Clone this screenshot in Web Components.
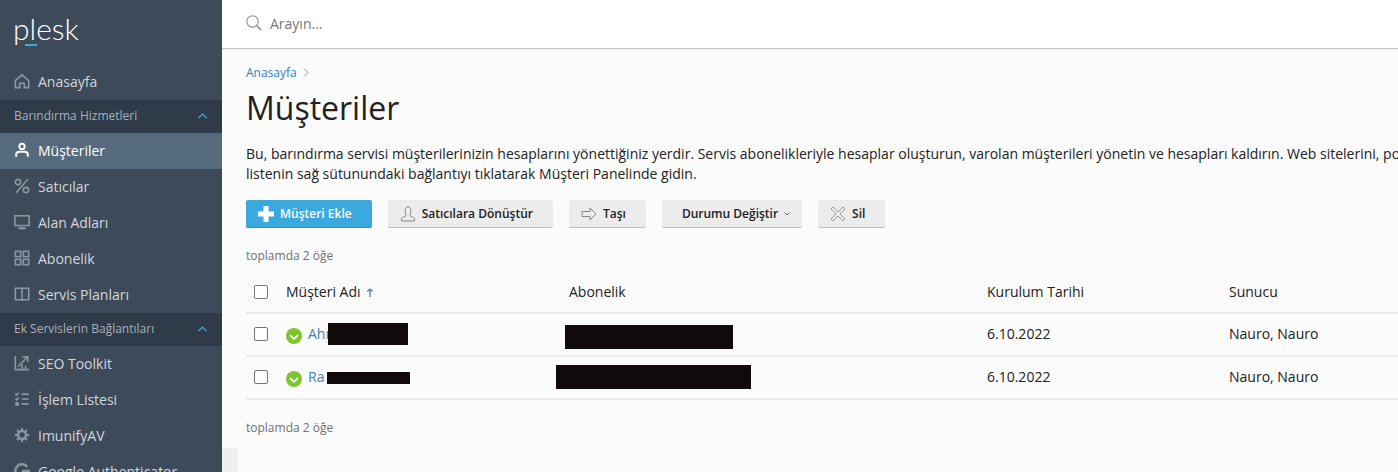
<!DOCTYPE html>
<html lang="tr">
<head>
<meta charset="utf-8">
<title>Müşteriler</title>
<style>
  html, body { margin: 0; height: 100%; overflow: hidden; }
  body { font-family: "Open Sans", sans-serif; background: #fbfbfb; }
</style>
</head>
<body>
<plesk-shell>
  <plesk-sidebar slot="side">
    <side-item icon="home" label="Anasayfa"></side-item>
    <side-group label="Barındırma Hizmetleri"></side-group>
    <side-item icon="user" label="Müşteriler" active></side-item>
    <side-item icon="percent" label="Satıcılar"></side-item>
    <side-item icon="monitor" label="Alan Adları"></side-item>
    <side-item icon="grid" label="Abonelik"></side-item>
    <side-item icon="book" label="Servis Planları"></side-item>
    <side-group label="Ek Servislerin Bağlantıları"></side-group>
    <side-item icon="chart" label="SEO Toolkit"></side-item>
    <side-item icon="list" label="İşlem Listesi"></side-item>
    <side-item icon="gear" label="ImunifyAV"></side-item>
    <side-item icon="google" label="Google Authenticator"></side-item>
  </plesk-sidebar>
  <top-search slot="top" placeholder="Arayın..."></top-search>
  <page-head crumb="Anasayfa" title="Müşteriler">
    Bu, barındırma servisi müşterilerinizin hesaplarını yönettiğiniz yerdir. Servis abonelikleriyle hesaplar oluşturun, varolan müşterileri yönetin ve hesapları kaldırın. Web sitelerini, po<br>listenin sağ sütunundaki bağlantıyı tıklatarak Müşteri Panelinde gidin.
  </page-head>
  <tool-bar>
    <tool-button primary icon="plus" label="Müşteri Ekle"></tool-button>
    <tool-button icon="reseller" label="Satıcılara Dönüştür"></tool-button>
    <tool-button icon="arrow" label="Taşı"></tool-button>
    <tool-button caret label="Durumu Değiştir"></tool-button>
    <tool-button icon="cross" label="Sil"></tool-button>
  </tool-bar>
  <item-count>toplamda 2 öğe</item-count>
  <customer-table>
    <customer-row name="Ahı" date="6.10.2022" server="Nauro, Nauro">
      <black-out style="left:82px;top:9px;width:80px;height:22px"></black-out>
      <black-out style="left:319px;top:11px;width:168px;height:24px"></black-out>
    </customer-row>
    <customer-row name="Ra" date="6.10.2022" server="Nauro, Nauro">
      <black-out style="left:81px;top:15px;width:83px;height:12px"></black-out>
      <black-out style="left:310px;top:8px;width:195px;height:24px"></black-out>
    </customer-row>
  </customer-table>
  <item-count>toplamda 2 öğe</item-count>
</plesk-shell>

<script>
const ICONS = {
  home: '<path d="M1.500 8.500 9 2l7.500 6.500V16.500h-5v-5h-5v5h-5z"/>',
  user: '<circle cx="9" cy="5" r="3"/><path d="M2.500 16.500v-2.500c0-2 1.500-3 3.500-3h6c2 0 3.500 1 3.500 3v2.500"/>',
  percent: '<circle cx="4.500" cy="4.500" r="3"/><circle cx="13.500" cy="13.500" r="3"/><path d="M15.500 1.500 2.500 16.500"/>',
  monitor: '<rect x="1" y="2" width="16" height="11"/><path d="M5 16h8" stroke-width="2.500"/>',
  grid: '<rect x="1.500" y="1.500" width="6" height="6"/><rect x="10.500" y="1.500" width="6" height="6"/><rect x="1.500" y="10.500" width="6" height="6"/><rect x="10.500" y="10.500" width="6" height="6"/>',
  book: '<path d="M9 2.500H1.500v13H9m0-13h7.500v13H9m0-13v14.500"/>',
  chart: '<path d="M1.500 1v15.500h15.500M4.500 13 14.500 3M9.500 2H15.500v6M9 15.500V10.500M13 15.500v-3.500"/>',
  list: '<path d="m1.500 3 1.500 1.500L5.500 2M1.500 8.500l1.500 1.500L5.500 7.500M8.500 3.500H16.500M8.500 9H16.500M8.500 14.500H16.500"/><circle cx="3.500" cy="14.500" r="1.500" fill="#8b96a1"/>',
  gear: '<circle cx="9" cy="9" r="4.500" stroke-width="2.800"/><path stroke-width="2.200" d="M9 1v2.500M9 14.500V17M1 9h2.500M14.500 9H17M3.300 3.300l1.800 1.800M12.900 12.900l1.800 1.800M3.300 14.700l1.800-1.800M12.900 5.100l1.800-1.800"/>',
  google: '<path stroke-width="2.800" d="M15 4.500A7.500 7.500 0 1 0 16.500 9H9"/>'
};

class PleskShell extends HTMLElement {
  connectedCallback() {
    this.attachShadow({ mode: 'open' });
    this.shadowRoot.innerHTML = `
      <style>
        :host { display: flex; height: 472px; overflow: hidden; position: relative; }
        .side { flex: 0 0 222px; }
        .main { flex: 1; min-width: 0; display: flex; flex-direction: column; }
        .body { padding: 0 0 0 24px; }
        .tab { position: absolute; left: 222px; top: 448px; width: 16px; height: 24px; background: #efefef; border-top-right-radius: 4px; }
      </style>
      <div class="side"><slot name="side"></slot></div>
      <div class="main">
        <slot name="top"></slot>
        <div class="body"><slot></slot></div>
      </div>
      <div class="tab"></div>`;
  }
}

class PleskSidebar extends HTMLElement {
  connectedCallback() {
    this.attachShadow({ mode: 'open' });
    this.shadowRoot.innerHTML = `
      <style>
        :host { display: block; height: 472px; overflow: hidden; background: #3d4a59; }
        .logo { height: 64px; position: relative; box-sizing: border-box; padding: 10px 0 0 13px; font: 300 30px/36px Lato, sans-serif; color: #fff; }
        .logo i { position: absolute; left: 25px; top: 44px; width: 12px; height: 2px; background: #3ea9dc; }
      </style>
      <div class="logo">plesk<i></i></div>
      <slot></slot>`;
  }
}

class SideItem extends HTMLElement {
  connectedCallback() {
    const active = this.hasAttribute('active');
    this.attachShadow({ mode: 'open' });
    this.shadowRoot.innerHTML = `
      <style>
        :host { display: flex; align-items: center; gap: 8px; box-sizing: border-box; height: 36px; padding: 0 0 2px 14px; font-size: 14px; font-weight: 500; color: ${active ? '#fff' : '#d3d7db'}; background: ${active ? '#566a7e' : 'transparent'}; }
        svg { width: 16px; height: 16px; fill: none; stroke: ${active ? '#fff' : '#8b96a1'}; stroke-width: ${active ? 2.200 : 1.800}; flex: none; }
      </style>
      <svg viewBox="0 0 18 18">${ICONS[this.getAttribute('icon')]}</svg>
      <span>${this.getAttribute('label')}</span>`;
  }
}

class SideGroup extends HTMLElement {
  connectedCallback() {
    this.attachShadow({ mode: 'open' });
    this.shadowRoot.innerHTML = `
      <style>
        :host { display: flex; align-items: center; justify-content: space-between; box-sizing: border-box; height: 33px; padding: 0 15px 2px 14px; font-size: 12px; color: #a9b1ba; background: #2f3b49; }
        svg { width: 9px; height: 6px; fill: none; stroke: #3ea9dc; stroke-width: 1.200; }
      </style>
      <span>${this.getAttribute('label')}</span>
      <svg viewBox="0 0 9 6"><path d="m.5 5 4-4 4 4"/></svg>`;
  }
}

class TopSearch extends HTMLElement {
  connectedCallback() {
    this.attachShadow({ mode: 'open' });
    this.shadowRoot.innerHTML = `
      <style>
        :host { display: flex; align-items: center; gap: 8px; box-sizing: content-box; height: 46px; padding: 0 0 2px 24px; background: #fff; border-bottom: 1px solid #c6c6c6; box-shadow: 0 1px 1px rgba(0,0,0,.05); font-size: 14px; color: #777; }
        svg { width: 16px; height: 16px; fill: none; stroke: #9a9a9a; stroke-width: 1.200; }
      </style>
      <svg viewBox="0 0 16 16"><circle cx="6.500" cy="6.500" r="5.700"/><path d="m10.700 10.700 4.500 4.500" stroke-width="1.800"/></svg>
      <span>${this.getAttribute('placeholder')}</span>`;
  }
}

class PageHead extends HTMLElement {
  connectedCallback() {
    this.attachShadow({ mode: 'open' });
    this.shadowRoot.innerHTML = `
      <style>
        :host { display: block; }
        .crumb { display: flex; align-items: center; gap: 6px; margin-top: 15px; height: 17px; font-size: 12px; color: #2f84c0; }
        .crumb svg { width: 6px; height: 9px; fill: none; stroke: #999; }
        h1 { margin: 5px 0 0; font-size: 32px; line-height: 44px; font-weight: 400; color: #222; }
        p { margin: 14px 0 0; font-size: 14px; line-height: 20px; color: #222; white-space: nowrap; }
      </style>
      <div class="crumb">${this.getAttribute('crumb')}<svg viewBox="0 0 6 9"><path d="m1 .5 4 4-4 4"/></svg></div>
      <h1>${this.getAttribute('title')}</h1>
      <p><slot></slot></p>`;
  }
}

class ToolBar extends HTMLElement {
  connectedCallback() {
    this.attachShadow({ mode: 'open' });
    this.shadowRoot.innerHTML = `
      <style>:host { display: flex; gap: 16px; margin-top: 16px; }</style>
      <slot></slot>`;
  }
}

const BUTTON_ICONS = {
  plus: '<path fill="#fff" d="M5.500 0h5v5.500H16v5h-5.500V16h-5v-5.500H0v-5h5.500z"/>',
  reseller: '<path fill="none" stroke="#8a8a8a" d="M8 1c2 0 3 1.500 3 3.500S10 8 10 9.500c0 1 4.500 1.500 4.500 3.500v2h-13v-2c0-2 4.500-2.500 4.500-3.500C6 8 5 6.500 5 4.500S6 1 8 1z"/>',
  arrow: '<path fill="none" stroke="#8a8a8a" d="M1 5.500h8V2l6 6-6 6v-3.500H1z"/>',
  cross: '<path fill="none" stroke="#9a9a9a" d="m3 1 5 5 5-5 2 2-5 5 5 5-2 2-5-5-5 5-2-2 5-5-5-5z"/>'
};

class ToolButton extends HTMLElement {
  connectedCallback() {
    const primary = this.hasAttribute('primary');
    const icon = this.getAttribute('icon');
    const caret = this.hasAttribute('caret');
    this.attachShadow({ mode: 'open' });
    this.shadowRoot.innerHTML = `
      <style>
        :host { display: flex; align-items: center; box-sizing: border-box; height: 28px; padding: ${caret ? '0 12px 0 20px' : '0 20px 0 12px'}; gap: 6px; border-radius: 2px; font-size: 12px; font-weight: 600; color: ${primary ? '#fff' : '#222'}; background: ${primary ? '#3ba9de' : '#ececec'}; border-bottom: 1px solid ${primary ? '#2b8fc0' : '#bdbdbd'}; }
        svg.i { width: 16px; height: 16px; flex: none; }
        svg.c { width: 6px; height: 4px; fill: none; stroke: #666; }
      </style>
      ${icon ? `<svg class="i" viewBox="0 0 16 16">${BUTTON_ICONS[icon]}</svg>` : ''}
      <span>${this.getAttribute('label')}</span>
      ${caret ? '<svg class="c" viewBox="0 0 6 4"><path d="m.5.5 2.500 2.500L5.500.5"/></svg>' : ''}`;
  }
}

class ItemCount extends HTMLElement {
  connectedCallback() {
    this.attachShadow({ mode: 'open' });
    this.shadowRoot.innerHTML = `
      <style>:host { display: block; margin-top: 19px; height: 17px; line-height: 17px; font-size: 12px; color: #707070; }</style>
      <slot></slot>`;
  }
}

const COLUMNS = '40px 283px 418px 242px 1fr';

class CustomerTable extends HTMLElement {
  connectedCallback() {
    this.attachShadow({ mode: 'open' });
    this.shadowRoot.innerHTML = `
      <style>
        :host { display: block; margin-top: 7px; font-size: 14px; color: #222; }
        .head { display: grid; grid-template-columns: ${COLUMNS}; align-items: center; box-sizing: content-box; height: 40px; padding-bottom: 1px; border-bottom: 2px solid #e9e9e9; }
        .box { width: 14px; height: 14px; margin: 1px 0 0 8px; box-sizing: border-box; border: 1px solid #777; border-radius: 2px; background: #fff; }
        .sort { display: inline-block; width: 8px; height: 9px; margin-left: 2px; }
        .sort path { fill: none; stroke: #3f85b8; stroke-width: 1.300; }
      </style>
      <div class="head">
        <div class="box"></div>
        <div>Müşteri Adı <svg class="sort" viewBox="0 0 8 9"><path d="M4 9V1M1.200 3.500 4 1l2.800 2.500"/></svg></div>
        <div>Abonelik</div>
        <div>Kurulum Tarihi</div>
        <div>Sunucu</div>
      </div>
      <slot></slot>`;
  }
}

class CustomerRow extends HTMLElement {
  connectedCallback() {
    this.attachShadow({ mode: 'open' });
    this.shadowRoot.innerHTML = `
      <style>
        :host { display: grid; grid-template-columns: ${COLUMNS}; align-items: center; position: relative; box-sizing: border-box; height: 43px; padding-bottom: 2px; border-bottom: 2px solid #ececec; font-size: 14px; color: #222; }
        .box { width: 14px; height: 14px; margin-left: 8px; box-sizing: border-box; border: 1px solid #777; border-radius: 2px; background: #fff; }
        .name { display: flex; align-items: center; gap: 6px; color: #3f80b5; }
        svg { width: 16px; height: 16px; margin-top: 4px; flex: none; }
      </style>
      <div class="box"></div>
      <div class="name">
        <svg viewBox="0 0 16 16"><circle cx="8" cy="8" r="8" fill="#7dc42d"/><path d="m4 7.200 4 3.600 4-3.600" fill="none" stroke="#fff" stroke-width="1.800"/></svg>
        <span>${this.getAttribute('name')}</span>
      </div>
      <div></div>
      <div>${this.getAttribute('date')}</div>
      <div>${this.getAttribute('server')}</div>
      <slot></slot>`;
  }
}

class BlackOut extends HTMLElement {
  connectedCallback() {
    this.attachShadow({ mode: 'open' });
    this.shadowRoot.innerHTML = `<style>:host { position: absolute; display: block; background: #100a0a; }</style>`;
  }
}

customElements.define('plesk-shell', PleskShell);
customElements.define('plesk-sidebar', PleskSidebar);
customElements.define('side-item', SideItem);
customElements.define('side-group', SideGroup);
customElements.define('top-search', TopSearch);
customElements.define('page-head', PageHead);
customElements.define('tool-bar', ToolBar);
customElements.define('tool-button', ToolButton);
customElements.define('item-count', ItemCount);
customElements.define('customer-table', CustomerTable);
customElements.define('customer-row', CustomerRow);
customElements.define('black-out', BlackOut);
</script>
</body>
</html>
